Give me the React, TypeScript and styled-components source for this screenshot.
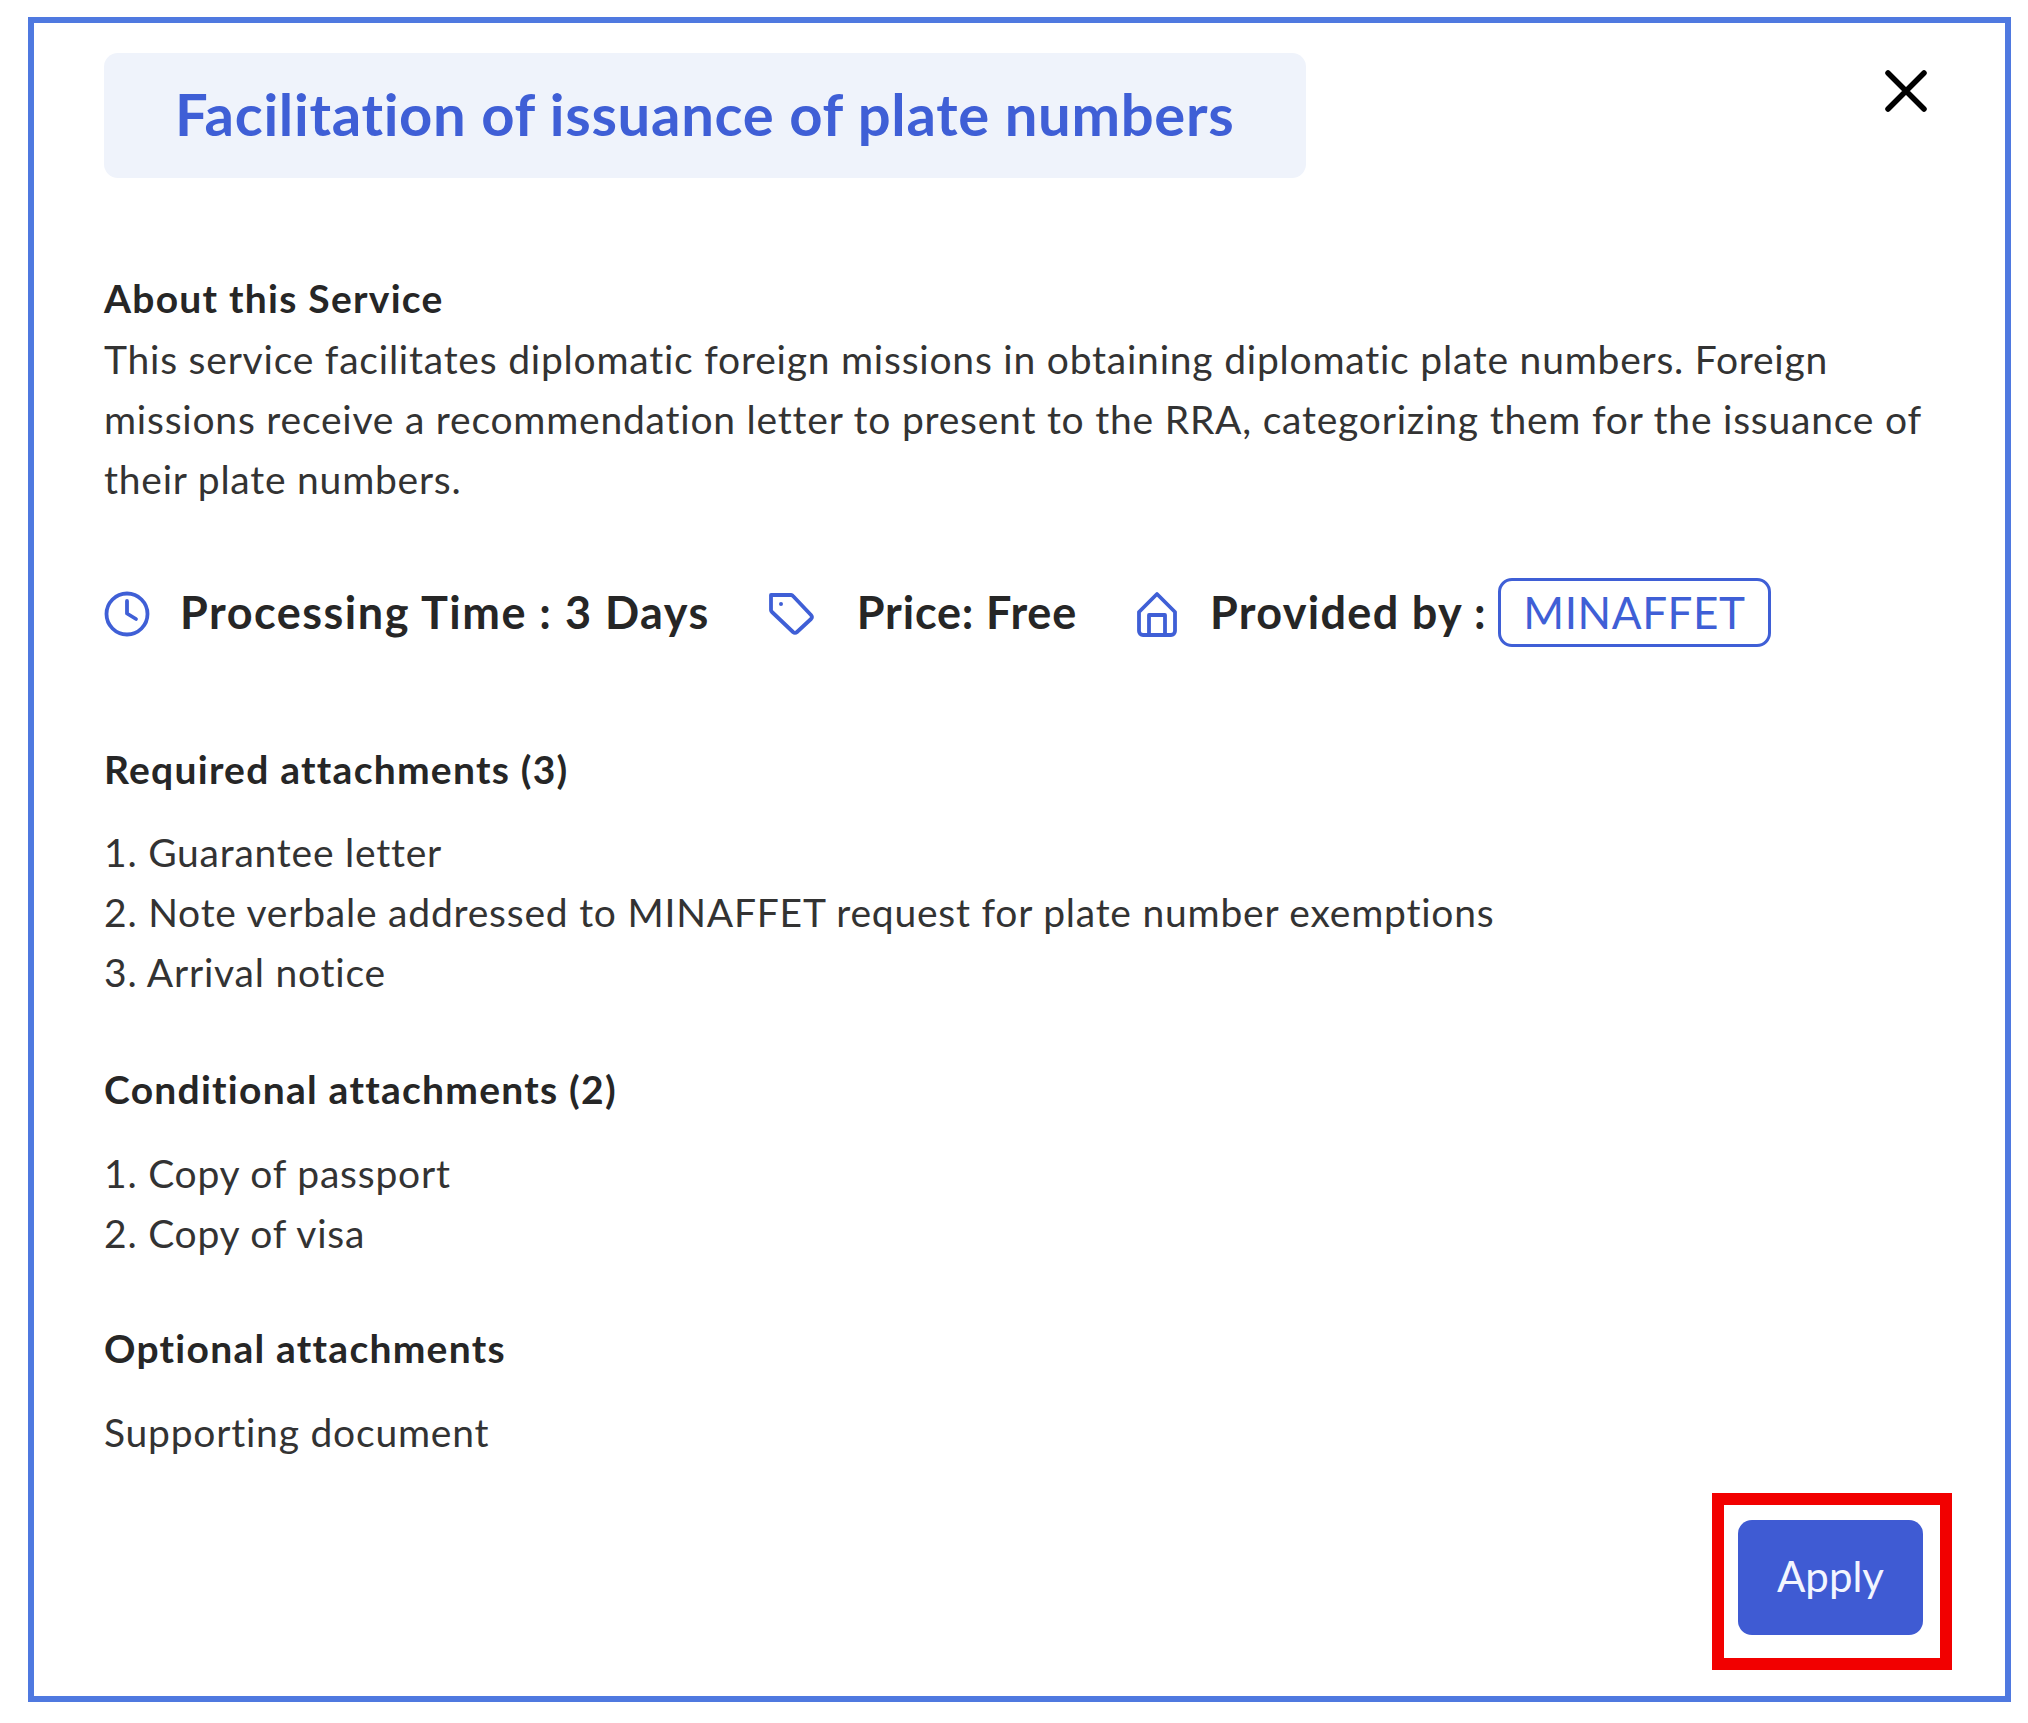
import React from 'react';
import styled, { createGlobalStyle } from 'styled-components';

const GlobalStyle = createGlobalStyle`
	html, body {
		margin: 0;
		padding: 0;
		background: #fff;
	}
	body {
		font-family: 'Lato', 'Open Sans', sans-serif;
		color: #262626;
	}
`;

const Frame = styled.div`
	box-sizing: border-box;
	width: 1983px;
	height: 1685px;
	margin: 17px 0 0 28px;
	padding: 30px 53px 0 70px;
	border: 6px solid #4f79e0;
	background: #fff;
`;

const Header = styled.header`
	display: flex;
	justify-content: space-between;
	align-items: flex-start;
`;

const TitleBox = styled.div`
	box-sizing: border-box;
	width: 1202px;
	height: 125px;
	padding: 0 0 5px 71px;
	display: flex;
	align-items: center;
	background: #eff3fb;
	border-radius: 14px;
`;

const Title = styled.h1`
	margin: 0;
	font-size: 58px;
	font-weight: 700;
	letter-spacing: 0.7px;
	color: #3f5fd6;
	white-space: nowrap;
`;

const CloseButton = styled.button`
	width: 42px;
	height: 42px;
	margin: 17px 25px 0 0;
	padding: 0;
	border: 0;
	background: none;
	line-height: 0;
`;

const SectionTitle = styled.h2<{ $top: number }>`
	margin: ${({ $top }) => $top}px 0 0;
	font-size: 39px;
	line-height: 58px;
	padding-bottom: 2px;
	font-weight: 700;
	letter-spacing: 1.25px;
	color: #262626;
`;

const Paragraph = styled.p<{ $top?: number }>`
	margin: ${({ $top }) => $top ?? 0}px 0 0;
	font-size: 39px;
	line-height: 60px;
	font-weight: 400;
	letter-spacing: 0.78px;
	color: #333;
	white-space: nowrap;
`;

const AttachmentList = styled.ol<{ $top: number }>`
	margin: ${({ $top }) => $top}px 0 0;
	padding: 0;
	list-style: none;
	font-size: 39px;
	line-height: 60px;
	letter-spacing: 0.78px;
	color: #333;
`;

const MetaRow = styled.div`
	display: flex;
	align-items: center;
	height: 69px;
	margin-top: 69px;
	gap: 58px;

	svg {
		margin-top: 3px;
	}
`;

const MetaItem = styled.div<{ $gap: number }>`
	display: flex;
	align-items: center;
	gap: ${({ $gap }) => $gap}px;
`;

const MetaText = styled.span<{ $spacing: number }>`
	padding-bottom: 2px;
	font-size: 45px;
	font-weight: 700;
	letter-spacing: ${({ $spacing }) => $spacing}px;
	color: #262626;
	white-space: nowrap;
`;

const ProviderChip = styled.span`
	box-sizing: border-box;
	height: 69px;
	width: 273px;
	margin-left: -20px;
	display: flex;
	align-items: center;
	justify-content: center;
	padding-bottom: 2px;
	border: 3px solid #3f5fd6;
	border-radius: 14px;
	font-size: 44px;
	font-weight: 400;
	letter-spacing: 0.6px;
	color: #3f5fd6;
`;

const Footer = styled.footer`
	display: flex;
	justify-content: flex-end;
	margin-top: 31px;
`;

const Highlight = styled.div`
	box-sizing: border-box;
	width: 240px;
	height: 177px;
	padding: 15px 17px 23px 14px;
	border: 12px solid #f20000;
`;

const ApplyButton = styled.button`
	width: 185px;
	height: 115px;
	padding: 0 0 4px;
	border: 0;
	border-radius: 14px;
	background: #3f5bd3;
	color: #f2f5ff;
	font-family: inherit;
	font-size: 42px;
	font-weight: 400;
`;

const ClockIcon = () => (
	<svg width="46" height="46" viewBox="0 0 46 46" fill="none" stroke="#3f5fd6" strokeWidth="3.8" strokeLinecap="round" strokeLinejoin="round">
		<circle cx="23" cy="23" r="20.5" />
		<path d="M23 10v12.5l9 5.5" />
	</svg>
);

const TagIcon = () => (
	<svg width="46" height="44" viewBox="0 0 46 44" fill="none" stroke="#3f5fd6" strokeWidth="3.8" strokeLinecap="round" strokeLinejoin="round">
		<path d="M3 3h20a3 3 0 0 1 2 1l18 19a3 3 0 0 1 0 4L29 40a3 3 0 0 1-4 0L4 20a3 3 0 0 1-1-2z" />
		<circle cx="13" cy="12" r="1" fill="#3f5fd6" strokeWidth="2" />
	</svg>
);

const HomeIcon = () => (
	<svg width="44" height="46" viewBox="0 0 44 46" fill="none" stroke="#3f5fd6" strokeWidth="3.8" strokeLinecap="round" strokeLinejoin="round">
		<path d="M4 21L22 3l18 18v19a4 4 0 0 1-4 4H8a4 4 0 0 1-4-4z" />
		<path d="M14 44V24h16v20" />
	</svg>
);

const CloseIcon = () => (
	<svg width="42" height="42" viewBox="0 0 42 42" fill="none" stroke="#000" strokeWidth="5.5" strokeLinecap="round">
		<path d="M3 3l36 36M39 3L3 39" />
	</svg>
);

const App: React.FC = () => {
	return (
		<>
			<GlobalStyle />
			<Frame>
				<Header>
					<TitleBox>
						<Title>Facilitation of issuance of plate numbers</Title>
					</TitleBox>
					<CloseButton aria-label="Close">
						<CloseIcon />
					</CloseButton>
				</Header>

				<SectionTitle $top={91}>About this Service</SectionTitle>
				<Paragraph>This service facilitates diplomatic foreign missions in obtaining diplomatic plate numbers. Foreign</Paragraph>
				<Paragraph>missions receive a recommendation letter to present to the RRA, categorizing them for the issuance of</Paragraph>
				<Paragraph>their plate numbers.</Paragraph>

				<MetaRow>
					<MetaItem $gap={30}>
						<ClockIcon />
						<MetaText $spacing={1.5}>Processing Time : 3 Days</MetaText>
					</MetaItem>
					<MetaItem $gap={43}>
						<TagIcon />
						<MetaText $spacing={0.8}>Price: Free</MetaText>
					</MetaItem>
					<MetaItem $gap={31}>
						<HomeIcon />
						<MetaText $spacing={1.3}>Provided by :</MetaText>
						<ProviderChip>MINAFFET</ProviderChip>
					</MetaItem>
				</MetaRow>

				<SectionTitle $top={93}>Required attachments (3)</SectionTitle>
				<AttachmentList $top={22}>
					<li>1. Guarantee letter</li>
					<li>2. Note verbale addressed to MINAFFET request for plate number exemptions</li>
					<li>3. Arrival notice</li>
				</AttachmentList>

				<SectionTitle $top={58}>Conditional attachments (2)</SectionTitle>
				<AttachmentList $top={23}>
					<li>1. Copy of passport</li>
					<li>2. Copy of visa</li>
				</AttachmentList>

				<SectionTitle $top={56}>Optional attachments</SectionTitle>
				<Paragraph $top={23}>Supporting document</Paragraph>

				<Footer>
					<Highlight>
						<ApplyButton>Apply</ApplyButton>
					</Highlight>
				</Footer>
			</Frame>
		</>
	);
};

export default App;
